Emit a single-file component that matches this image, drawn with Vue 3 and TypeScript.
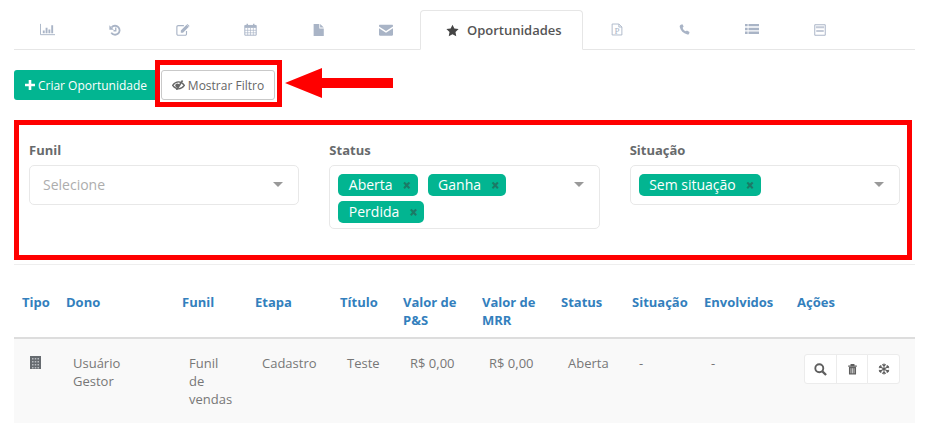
<script setup lang="ts">
const leftTabs = ['chart', 'history', 'edit', 'calendar', 'file', 'mail']
const rightTabs = ['ppt', 'phone', 'list', 'news']
const grid = [3.5, 6.5, 9.5, 12.5]
const headers = ['Tipo', 'Dono', 'Funil', 'Etapa', 'Título', 'Valor de P&S', 'Valor de MRR', 'Status', 'Situação', 'Envolvidos', 'Ações']
const colClasses = ['c1', 'c2', 'c3', 'c4', 'c5', 'c6', 'c7', 'c8', 'c9', 'c10', 'c11']
const statuses = ['Aberta', 'Ganha', 'Perdida']
</script>

<template>
  <div class="page">
    <nav class="tabs">
      <div v-for="t in leftTabs" :key="t" class="tab">
        <svg class="ti" :class="`ti-${t}`" viewBox="0 0 16 16">
          <template v-if="t === 'chart'">
            <path d="M0.5 2v11.500H16" fill="none" stroke="currentColor" stroke-width="1" />
            <path d="M3 9h2v3H3zM6 6h2v6H6zM9 8h2v4H9zM12 3.500h2V12h-2z" fill="currentColor" />
          </template>
          <template v-else-if="t === 'history'">
            <path d="M3.500 4.500A6 6 0 1 1 3 11.500" fill="none" stroke="currentColor" stroke-width="2.400" />
            <path d="M0.500 1.500v6h6z" fill="currentColor" />
            <path d="M9 4.500v4.500H6" fill="none" stroke="currentColor" stroke-width="1.800" />
          </template>
          <template v-else-if="t === 'edit'">
            <path d="M9 3H2.500A1.500 1.500 0 0 0 1 4.500v8A1.500 1.500 0 0 0 2.500 14h8a1.500 1.500 0 0 0 1.500-1.500V9" fill="none" stroke="currentColor" stroke-width="1.300" />
            <path d="M5.500 8.500l6.500-6.500 2.500 2.500-6.500 6.500H5.500zM13 1l2.500 2.500-.8.8-2.500-2.500z" fill="currentColor" />
          </template>
          <template v-else-if="t === 'calendar'">
            <path d="M1 3h14v12H1z" fill="none" stroke="currentColor" stroke-width="1.200" />
            <path d="M1 3h14v3H1z" fill="currentColor" />
            <path d="M4 1v3M12 1v3" stroke="currentColor" stroke-width="1.800" />
            <path d="M1 9h14M1 12h14M4.500 6v9M8 6v9M11.500 6v9" stroke="currentColor" stroke-width="0.800" />
          </template>
          <template v-else-if="t === 'file'">
            <path d="M2 .5H9v5.500h5.500v9.500H2zM10 .5l4.500 4.500H10z" fill="currentColor" />
          </template>
          <template v-else>
            <path d="M1 2h14c.5 0 1 .5 1 1v1.100L8 9 0 4.100V3c0-.5.500-1 1-1zM0 6l8 5 8-5v7.500c0 .5-.5 1-1 1H1c-.5 0-1-.5-1-1z" fill="currentColor" />
          </template>
        </svg>
      </div>
      <div class="tab active">
        <svg class="star" viewBox="0 0 16 16">
          <path d="M8 .8l2.300 4.800 5.200.7-3.800 3.600.9 5.200L8 12.600l-4.600 2.500.9-5.200L.5 6.300l5.200-.7z" fill="currentColor" />
        </svg>
        <span>Oportunidades</span>
      </div>
      <div v-for="t in rightTabs" :key="t" class="tab">
        <svg class="ti" :class="`ti-${t}`" viewBox="0 0 16 16">
          <template v-if="t === 'ppt'">
            <path d="M1.500 .7h9l4 4v10.600h-13zM10.500 .7v4h4" fill="none" stroke="currentColor" stroke-width="1.200" />
            <text x="4.500" y="13.500" class="ppt-letter">P</text>
          </template>
          <template v-else-if="t === 'phone'">
            <path d="M2.500 1l2.500-.8 1.800 3.600-1.500 1.500c.6 2.600 2.200 4.400 4.700 5.400l1.500-1.300 3.800 2.200-.6 2.400c-.3 1-1.400 1.500-2.500 1.300C6 13.500 2.300 9.500 1.100 4.300.8 2.800 1.300 1.600 2.500 1z" fill="currentColor" />
          </template>
          <template v-else-if="t === 'list'">
            <path d="M0 1h3v2.800H0zM4 1h12v2.800H4zM0 5.400h3v2.800H0zM4 5.400h12v2.800H4zM0 9.800h3v2.800H0zM4 9.800h12v2.800H4z" fill="currentColor" />
          </template>
          <template v-else>
            <path d="M1 1h14v14H1z" fill="none" stroke="currentColor" stroke-width="1.300" />
            <path d="M2.500 3h11v2.500h-11zM3 8h10v2.500H3z" fill="currentColor" opacity=".7" />
          </template>
        </svg>
      </div>
    </nav>

    <div class="actions">
      <button class="btn primary">
        <svg class="plus" viewBox="0 0 10 10"><path d="M3.700 0h2.600v3.700H10v2.600H6.300V10H3.700V6.300H0V3.700h3.700z" fill="currentColor" /></svg>
        Criar Oportunidade
      </button>
      <div class="highlight-wrap">
        <button class="btn ghost">
          <svg class="eye" viewBox="0 0 16 12">
            <path d="M.8 6.500C3 3.500 5.300 2.200 8 2.200S13 3.500 15.200 6.500C13 9.500 10.700 10.800 8 10.800S3 9.500 .8 6.500z" fill="none" stroke="currentColor" stroke-width="1.700" />
            <circle cx="6.500" cy="6.500" r="2.500" fill="currentColor" />
            <path d="M13 .5L5.500 12" stroke="currentColor" stroke-width="2" />
          </svg>
          Mostrar Filtro
        </button>
        <span class="highlight"></span>
      </div>
      <svg class="arrow" viewBox="0 0 108 30">
        <path d="M0 15L37 0v10h71v10H37v10z" fill="#ff0000" />
      </svg>
    </div>

    <section class="filters">
      <div class="field">
        <label>Funil</label>
        <div class="select">
          <span class="placeholder">Selecione</span>
          <i class="caret"></i>
        </div>
      </div>
      <div class="field">
        <label>Status</label>
        <div class="select tags">
          <span v-for="s in statuses" :key="s" class="tag">{{ s }}<b>×</b></span>
          <i class="caret"></i>
        </div>
      </div>
      <div class="field">
        <label>Situação</label>
        <div class="select tags">
          <span class="tag">Sem situação<b>×</b></span>
          <i class="caret"></i>
        </div>
      </div>
    </section>

    <div class="rule"></div>

    <table class="grid">
      <colgroup>
        <col v-for="c in colClasses" :key="c" :class="c" />
      </colgroup>
      <thead>
        <tr>
          <th v-for="h in headers" :key="h">{{ h }}</th>
        </tr>
      </thead>
      <tbody>
        <tr>
          <td>
            <svg class="building" viewBox="0 0 11 13">
              <path d="M0 0h11v13H0z" fill="#666b70" />
              <template v-for="y in grid" :key="y">
                <path :d="`M2 ${y - 1.5}h1.500v1.500H2zM4.750 ${y - 1.500}h1.500v1.500h-1.500zM7.500 ${y - 1.500}h1.500v1.500H7.500z`" fill="#b9bdc1" />
              </template>
            </svg>
          </td>
          <td>Usuário Gestor</td>
          <td>Funil de vendas</td>
          <td>Cadastro</td>
          <td>Teste</td>
          <td>R$ 0,00</td>
          <td>R$ 0,00</td>
          <td>Aberta</td>
          <td>-</td>
          <td>-</td>
          <td class="ops">
            <div class="group">
              <button>
                <svg class="i-search" viewBox="0 0 14 14"><circle cx="5.700" cy="5.700" r="4.300" fill="none" stroke="currentColor" stroke-width="2" /><path d="M9 9l4 4" stroke="currentColor" stroke-width="2.400" /></svg>
              </button>
              <button>
                <svg class="i-trash" viewBox="0 0 14 14"><path d="M1.500 2.500h11v1.500h-11zM4.500 .5h5v2.500h-5z" fill="currentColor" /><path d="M2.500 4.500h9v9.500h-9z" fill="currentColor" /><path d="M5 6v6.500M7 6v6.500M9 6v6.500" stroke="#fff" stroke-width=".8" /></svg>
              </button>
              <button>
                <svg class="i-snow" viewBox="0 0 14 14"><path d="M7 .5v13M1.400 3.750l11.200 6.500M1.400 10.250l11.200-6.500M5 1.500l2 2 2-2M5 12.500l2-2 2 2M1 5.500l2.800-.4L3 2.500M13 8.500l-2.800.4.800 2.600M1 8.500l2.800.4L3 11.500M13 5.500l-2.800-.4.800-2.600" fill="none" stroke="currentColor" stroke-width="1.300" /></svg>
              </button>
            </div>
          </td>
        </tr>
      </tbody>
    </table>
  </div>
</template>

<style>
html, body {
  margin: 0;
  background: #fff;
}
</style>

<style scoped>
.page {
  width: 930px;
  height: 446px;
  box-sizing: border-box;
  padding: 10px 15px 0 14px;
  font-family: "Open Sans", "Liberation Sans", sans-serif;
  font-size: 13px;
  line-height: 18px;
  color: #777;
  overflow: hidden;
}
.tabs {
  display: flex;
  height: 40px;
  box-sizing: border-box;
  border-bottom: 1px solid #e6e6e6;
}
.tab {
  width: 67.67px;
  height: 39px;
  display: flex;
  align-items: center;
  justify-content: center;
  color: #a9b4c6;
}
.ti {
  width: 14px;
  height: 14px;
}
.ti-chart { width: 15px; height: 15px; }
.ti-history { width: 12px; height: 12px; }
.ti-edit { width: 14px; height: 14px; }
.ti-calendar { width: 13px; height: 13px; }
.ti-file { width: 13px; height: 14px; }
.ti-mail { width: 14px; height: 14px; }
.ti-ppt { width: 12px; height: 13px; }
.ti-phone { width: 11px; height: 11px; }
.ti-list { width: 14px; height: 14px; }
.ti-news { width: 12px; height: 12px; }
.tab.active {
  width: 163px;
  height: 40px;
  box-sizing: border-box;
  justify-content: flex-start;
  padding-left: 25px;
  border: 1px solid #e6e6e6;
  border-bottom-color: #fff;
  border-radius: 4px 4px 0 0;
  background: #fff;
  color: #555;
  font-weight: 600;
  gap: 8px;
}
.star {
  width: 13px;
  height: 13px;
  color: #444;
}
.ppt-letter {
  font-family: "Liberation Serif", serif;
  font-size: 12px;
  fill: currentColor;
}
.actions {
  position: relative;
  display: flex;
  margin-top: 20px;
  height: 30px;
}
.btn {
  height: 30px;
  box-sizing: border-box;
  border-radius: 3px;
  font-family: inherit;
  font-size: 12px;
  display: inline-flex;
  align-items: center;
  padding: 0;
}
.primary {
  width: 144px;
  border: 0;
  background: #02b591;
  color: #fff;
  justify-content: center;
  gap: 3px;
}
.plus {
  width: 10px;
  height: 10px;
}
.highlight-wrap {
  position: relative;
  margin-left: 3px;
}
.ghost {
  width: 114px;
  border: 1px solid #c9c9c9;
  background: #fff;
  color: #666;
  justify-content: center;
  gap: 3px;
}
.eye {
  width: 13px;
  height: 10px;
  color: #666;
}
.highlight {
  position: absolute;
  left: -6px;
  top: -10px;
  width: 127px;
  height: 47px;
  box-sizing: border-box;
  border: 5px solid #ff0000;
  pointer-events: none;
}
.arrow {
  position: absolute;
  left: 271px;
  top: -2px;
  width: 108px;
  height: 30px;
}
.filters {
  width: 898px;
  height: 140px;
  box-sizing: border-box;
  margin-top: 20px;
  border: 5px solid #ff0000;
  padding: 16px 7px 0 10px;
  display: grid;
  grid-template-columns: repeat(3, 1fr);
  column-gap: 30px;
  align-items: start;
}
.field label {
  display: block;
  font-weight: 700;
  color: #676a6c;
  margin-bottom: 6px;
}
.select {
  position: relative;
  min-height: 40px;
  box-sizing: border-box;
  border: 1px solid #e8e8e8;
  border-radius: 5px;
  font-size: 14px;
}
.placeholder {
  display: block;
  padding: 9px 13px;
  line-height: 20px;
  color: #adadad;
}
.caret {
  position: absolute;
  right: 15px;
  top: 16px;
  width: 0;
  height: 0;
  border-left: 5px solid transparent;
  border-right: 5px solid transparent;
  border-top: 5px solid #999;
}
.tags {
  display: flex;
  flex-wrap: wrap;
  align-content: flex-start;
  column-gap: 10px;
  row-gap: 5px;
  padding: 8px 40px 5px 8px;
}
.tag {
  display: inline-flex;
  align-items: center;
  height: 22px;
  box-sizing: border-box;
  padding: 0 7px 0 10.5px;
  border-radius: 5px;
  background: #02b591;
  color: #fff;
  white-space: nowrap;
}
.tag b {
  margin-left: 10px;
  width: 8px;
  text-align: center;
  font-weight: 800;
  font-size: 15px;
  color: #1c7a66;
}
.rule {
  height: 1px;
  margin-top: 4px;
  background: #eeeeee;
}
.grid {
  width: 901px;
  margin-top: 20px;
  border-collapse: collapse;
  table-layout: fixed;
}
.c1 { width: 44px; }
.c2 { width: 116px; }
.c3 { width: 73px; }
.c4 { width: 85px; }
.c5 { width: 63px; }
.c6 { width: 79px; }
.c7 { width: 79px; }
.c8 { width: 71px; }
.c9 { width: 72px; }
.c10 { width: 93px; }
.c11 { width: 126px; }
th {
  padding: 8px;
  text-align: left;
  vertical-align: top;
  font-weight: 700;
  color: #337fbd;
  border-bottom: 2px solid #dddddd;
}
tbody tr {
  background: #f9f9f9;
  height: 85px;
}
td {
  padding: 15px;
  vertical-align: top;
}
.building {
  display: block;
  width: 11px;
  height: 13px;
  margin: 2px 0 0 1px;
}
.group {
  display: flex;
  justify-content: flex-end;
}
.group button {
  width: 32.67px;
  height: 30px;
  box-sizing: border-box;
  padding: 0;
  border: 1px solid #ececec;
  background: #fff;
  color: #5e5e5e;
  display: flex;
  align-items: center;
  justify-content: center;
  margin-left: -1px;
}
.group button:first-child {
  border-radius: 3px 0 0 3px;
}
.group button:last-child {
  border-radius: 0 3px 3px 0;
}
.i-search { width: 13px; height: 13px; }
.i-trash { width: 11px; height: 12px; }
.i-snow { width: 12px; height: 12px; }
</style>
